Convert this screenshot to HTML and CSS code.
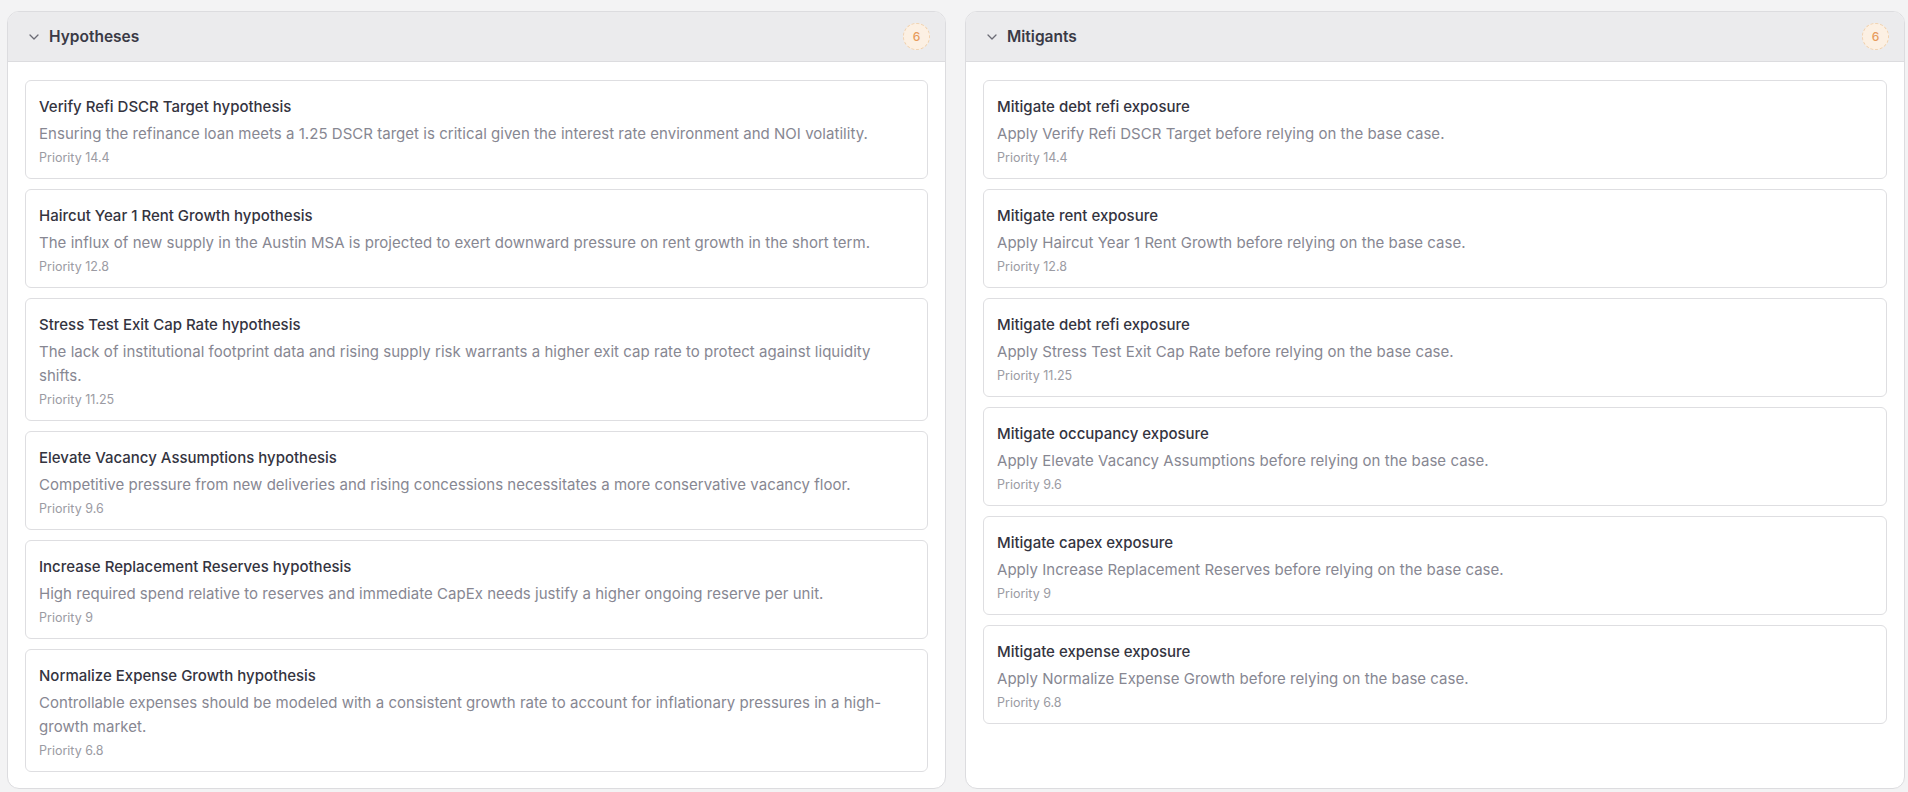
FILE: index.html
```html
<!DOCTYPE html>
<html lang="en">
<head>
<meta charset="utf-8">
<title>Hypotheses and Mitigants</title>
<link rel="stylesheet" href="styles.css">
</head>
<body>
<main class="board">
  <section class="panel">
    <header class="panel-head">
      <svg class="chev" viewBox="0 0 10 6" width="10" height="6"><path d="M1 1l4 4 4-4" fill="none" stroke="#6b6b75" stroke-width="1.3" stroke-linecap="round" stroke-linejoin="round"/></svg>
      <h2 class="panel-title">Hypotheses</h2>
      <span class="badge">6</span>
    </header>
    <div class="panel-body">
      <article class="card">
        <h3 class="card-title">Verify Refi DSCR Target hypothesis</h3>
        <p class="card-desc">Ensuring the refinance loan meets a 1.25 DSCR target is critical given the interest rate environment and NOI volatility.</p>
        <p class="card-meta">Priority 14.4</p>
      </article>
      <article class="card">
        <h3 class="card-title">Haircut Year 1 Rent Growth hypothesis</h3>
        <p class="card-desc">The influx of new supply in the Austin MSA is projected to exert downward pressure on rent growth in the short term.</p>
        <p class="card-meta">Priority 12.8</p>
      </article>
      <article class="card">
        <h3 class="card-title">Stress Test Exit Cap Rate hypothesis</h3>
        <p class="card-desc">The lack of institutional footprint data and rising supply risk warrants a higher exit cap rate to protect against liquidity shifts.</p>
        <p class="card-meta">Priority 11.25</p>
      </article>
      <article class="card">
        <h3 class="card-title">Elevate Vacancy Assumptions hypothesis</h3>
        <p class="card-desc">Competitive pressure from new deliveries and rising concessions necessitates a more conservative vacancy floor.</p>
        <p class="card-meta">Priority 9.6</p>
      </article>
      <article class="card">
        <h3 class="card-title">Increase Replacement Reserves hypothesis</h3>
        <p class="card-desc">High required spend relative to reserves and immediate CapEx needs justify a higher ongoing reserve per unit.</p>
        <p class="card-meta">Priority 9</p>
      </article>
      <article class="card">
        <h3 class="card-title">Normalize Expense Growth hypothesis</h3>
        <p class="card-desc">Controllable expenses should be modeled with a consistent growth rate to account for inflationary pressures in a high-growth market.</p>
        <p class="card-meta">Priority 6.8</p>
      </article>
    </div>
  </section>
  <section class="panel">
    <header class="panel-head">
      <svg class="chev" viewBox="0 0 10 6" width="10" height="6"><path d="M1 1l4 4 4-4" fill="none" stroke="#6b6b75" stroke-width="1.3" stroke-linecap="round" stroke-linejoin="round"/></svg>
      <h2 class="panel-title">Mitigants</h2>
      <span class="badge">6</span>
    </header>
    <div class="panel-body">
      <article class="card">
        <h3 class="card-title">Mitigate debt refi exposure</h3>
        <p class="card-desc">Apply Verify Refi DSCR Target before relying on the base case.</p>
        <p class="card-meta">Priority 14.4</p>
      </article>
      <article class="card">
        <h3 class="card-title">Mitigate rent exposure</h3>
        <p class="card-desc">Apply Haircut Year 1 Rent Growth before relying on the base case.</p>
        <p class="card-meta">Priority 12.8</p>
      </article>
      <article class="card">
        <h3 class="card-title">Mitigate debt refi exposure</h3>
        <p class="card-desc">Apply Stress Test Exit Cap Rate before relying on the base case.</p>
        <p class="card-meta">Priority 11.25</p>
      </article>
      <article class="card">
        <h3 class="card-title">Mitigate occupancy exposure</h3>
        <p class="card-desc">Apply Elevate Vacancy Assumptions before relying on the base case.</p>
        <p class="card-meta">Priority 9.6</p>
      </article>
      <article class="card">
        <h3 class="card-title">Mitigate capex exposure</h3>
        <p class="card-desc">Apply Increase Replacement Reserves before relying on the base case.</p>
        <p class="card-meta">Priority 9</p>
      </article>
      <article class="card">
        <h3 class="card-title">Mitigate expense exposure</h3>
        <p class="card-desc">Apply Normalize Expense Growth before relying on the base case.</p>
        <p class="card-meta">Priority 6.8</p>
      </article>
    </div>
  </section>
</main>
</body>
</html>
```

FILE: styles.css
```css
* { box-sizing: border-box; }
html, body { margin: 0; padding: 0; background: #f3f3f4; }
body {
  font-family: Inter, "Noto Sans", "Liberation Sans", sans-serif;
  color: #34343f;
}
.board {
  display: grid;
  grid-template-columns: 939px 940px;
  column-gap: 19px;
  padding: 11px 3px 5px 7px;
  align-items: stretch;
}
.panel {
  background: #fff;
  border: 1px solid #dcdcdf;
  border-radius: 12px;
  overflow: hidden;
  display: flex;
  flex-direction: column;
}
.panel-head {
  display: flex;
  align-items: center;
  height: 50px;
  padding: 0 15px 0 21px;
  background: #ebebed;
  border-bottom: 1px solid #dcdcdf;
}
.chev { flex: none; margin-right: 10px; }
.panel-title {
  margin: 0;
  font-size: 15.5px;
  font-weight: 600;
  color: #3a3a46;
  flex: 1;
}
.badge {
  width: 27px;
  height: 27px;
  border-radius: 50%;
  background: #fcf0e3;
  border: 1px dashed #f2d2ae;
  color: #e79b5c;
  font-size: 12px;
  font-weight: 500;
  display: flex;
  align-items: center;
  justify-content: center;
}
.panel-body {
  padding: 18px 17px 16px;
  display: flex;
  flex-direction: column;
  gap: 10px;
}
.card {
  border: 1px solid #dedee1;
  border-radius: 6px;
  padding: 15px 18px 10px 13px;
}
.card-title {
  margin: 0;
  font-size: 15px;
  line-height: 22px;
  font-weight: 500;
  color: #34343f;
}
.card-desc {
  margin: 4px 0 0;
  font-size: 15px;
  line-height: 24px;
  letter-spacing: 0.03px;
  color: #878792;
}
.card-meta {
  margin: 2px 0 0;
  font-size: 12.5px;
  line-height: 20px;
  color: #9b9ba3;
}
```
